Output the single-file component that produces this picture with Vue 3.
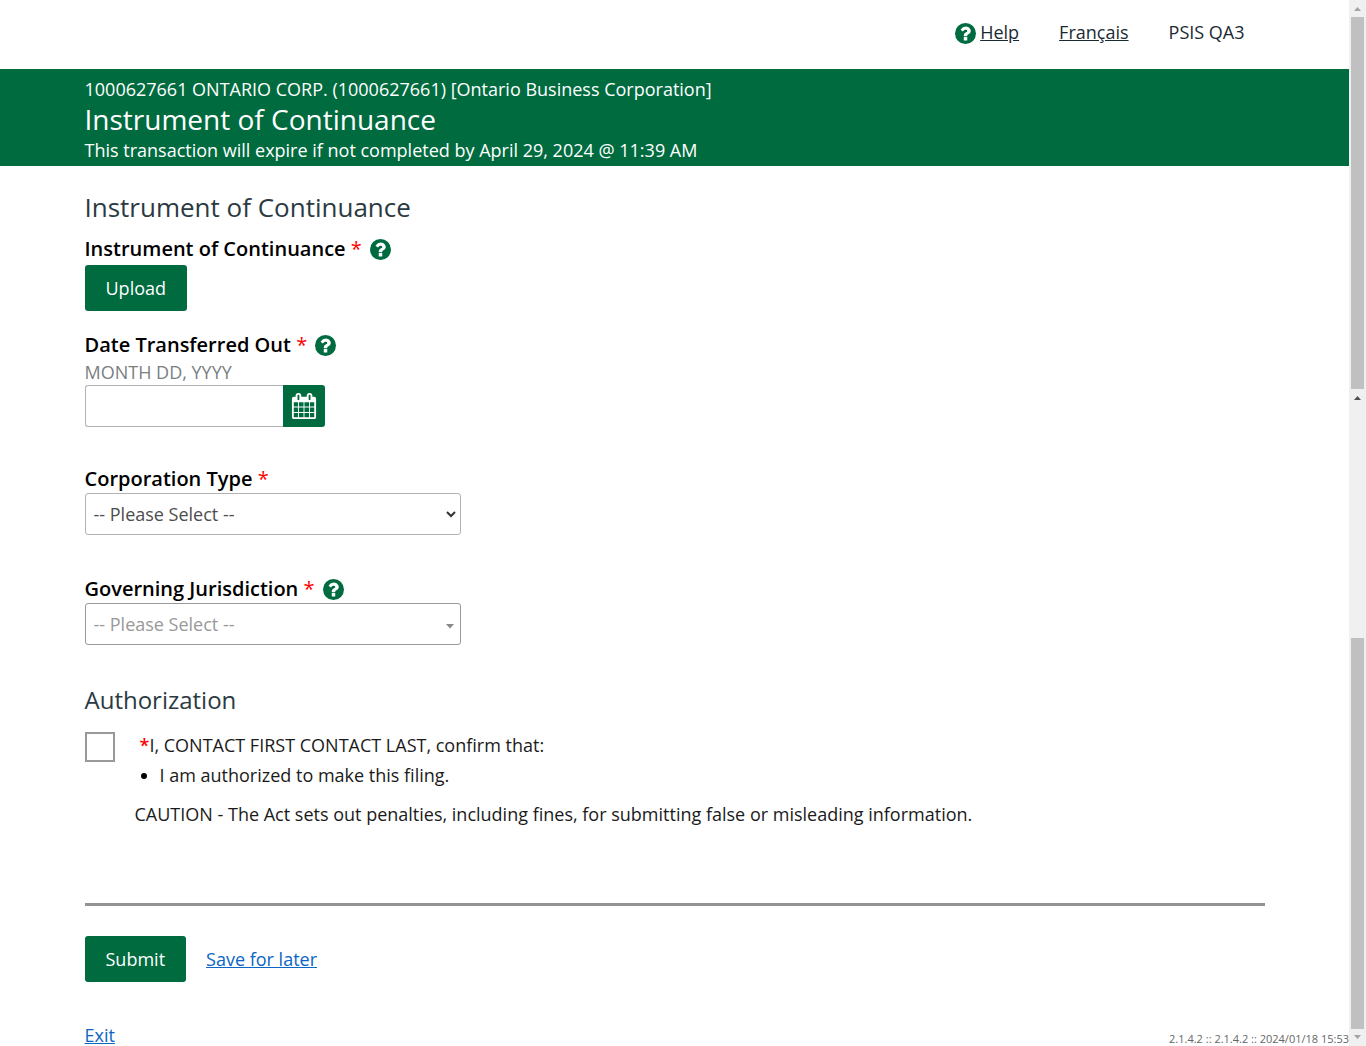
<script setup>
import { ref, h } from 'vue'

const dateOut = ref('')
const corpType = ref('')
const jurisdiction = ref('')
const confirmed = ref(false)

const HelpIcon = () =>
  h('svg', { viewBox: '0 0 1536 1536', width: 21, height: 21, display: 'block', 'aria-hidden': 'true' }, [
    h('circle', { cx: 768, cy: 768, r: 768, fill: '#006b3f' }),
    h('path', {
      fill: '#fff',
      d: 'M896 1248v-192q0-14-9-23t-23-9H672q-14 0-23 9t-9 23v192q0 14 9 23t23 9h192q14 0 23-9t9-23zm256-672q0-88-55.500-163T958 297t-170-41q-243 0-371 213-15 24 8 42l132 100q7 6 19 6 16 0 25-12 53-68 86-92 34-24 86-24 48 0 85.500 26t37.500 59q0 38-20 61t-68 45q-63 28-115.500 86.500T640 892v36q0 14 9 23t23 9h192q14 0 23-9t9-23q0-19 21.500-49.500T972 829q32-18 49-28.500t46-35 44.500-48 28-60.500 12.500-81z'
    })
  ])
</script>

<template>
  <div class="page">
    <div class="main">
      <header class="top wrap">
        <a href="#" class="help"><HelpIcon /><span>Help</span></a>
        <a href="#" class="lang">Français</a>
        <span>PSIS QA3</span>
      </header>

      <div class="banner">
        <div class="wrap">
          <p>1000627661 ONTARIO CORP. (1000627661) [Ontario Business Corporation]</p>
          <h1>Instrument of Continuance</h1>
          <p>This transaction will expire if not completed by April 29, 2024 @ 11:39 AM</p>
        </div>
      </div>

      <form class="wrap form" @submit.prevent>
        <h2 class="section">Instrument of Continuance</h2>

        <div class="field upload">
          <div class="label-row">
            <label for="upload">Instrument of Continuance <b>*</b></label>
            <button type="button" class="tip" aria-label="About this instrument"><HelpIcon /></button>
          </div>
          <button id="upload" type="button" class="btn">Upload</button>
        </div>

        <div class="field date">
          <div class="label-row">
            <label for="date">Date Transferred Out <b>*</b></label>
            <button type="button" class="tip" aria-label="About the date"><HelpIcon /></button>
          </div>
          <div class="hint">MONTH DD, YYYY</div>
          <div class="date-row">
            <input id="date" v-model="dateOut" type="text" />
            <button type="button" class="cal" aria-label="Choose date">
              <svg viewBox="0 0 1792 1792" width="26" height="26" aria-hidden="true">
                <path fill="#fff" d="M192 1664h288v-288h-288v288zm352 0h320v-288h-320v288zm-352-352h288v-320h-288v320zm352 0h320v-320h-320v320zm-352-384h288v-288h-288v288zm736 736h320v-288h-320v288zm-384-736h320v-288h-320v288zm768 736h288v-288h-288v288zm-384-352h320v-320h-320v320zm-352-864v-288q0-13-9.500-22.500t-22.500-9.500h-64q-13 0-22.500 9.500t-9.500 22.500v288q0 13 9.500 22.500t22.500 9.500h64q13 0 22.500-9.500t9.500-22.500zm736 864h288v-320h-288v320zm-384-384h320v-288h-320v288zm384 0h288v-288h-288v288zm32-480v-288q0-13-9.500-22.500t-22.500-9.500h-64q-13 0-22.500 9.500t-9.500 22.500v288q0 13 9.500 22.500t22.500 9.500h64q13 0 22.500-9.500t9.500-22.500zm384-64v1280q0 52-38 90t-90 38h-1408q-52 0-90-38t-38-90v-1280q0-52 38-90t90-38h128v-96q0-66 47-113t113-47h64q66 0 113 47t47 113v96h384v-96q0-66 47-113t113-47h64q66 0 113 47t47 113v96h128q52 0 90 38t38 90z" />
              </svg>
            </button>
          </div>
        </div>

        <div class="field">
          <div class="label-row"><label for="corp">Corporation Type <b>*</b></label></div>
          <div class="select-box">
            <select id="corp" v-model="corpType"><option value="">-- Please Select --</option></select>
            <svg class="arrow" viewBox="0 0 10 7" width="10" height="7"><path d="M1 1l4 4 4-4" fill="none" stroke="#333" stroke-width="2" /></svg>
          </div>
        </div>

        <div class="field">
          <div class="label-row">
            <label for="juris">Governing Jurisdiction <b>*</b></label>
            <button type="button" class="tip" aria-label="About the jurisdiction"><HelpIcon /></button>
          </div>
          <div class="select-box muted">
            <select id="juris" v-model="jurisdiction"><option value="">-- Please Select --</option></select>
            <svg class="arrow" viewBox="0 0 10 6" width="10" height="6"><path d="M1 1h8L5 5.500z" fill="#888" /></svg>
          </div>
        </div>

        <h2 class="section auth">Authorization</h2>
        <div class="confirm">
          <input id="confirm" v-model="confirmed" type="checkbox" />
          <div class="statement">
            <label for="confirm"><b>*</b>I, CONTACT FIRST CONTACT LAST, confirm that:</label>
            <ul><li>I am authorized to make this filing.</li></ul>
            <p>CAUTION - The Act sets out penalties, including fines, for submitting false or misleading information.</p>
          </div>
        </div>

        <hr />
        <div class="actions">
          <button type="submit" class="btn">Submit</button>
          <a href="#">Save for later</a>
        </div>
        <a href="#" class="exit">Exit</a>
      </form>
      <div class="version">2.1.4.2 :: 2.1.4.2 :: 2024/01/18 15:53</div>
    </div>

    <div class="rail" aria-hidden="true">
      <svg class="tri" viewBox="0 0 17 17" width="17" height="17"><path d="M5 11h7L8.500 7z" fill="#a3a3a3" /></svg>
      <div class="thumb upper"></div>
      <svg class="tri" viewBox="0 0 17 17" width="17" height="17"><path d="M5 11h7L8.500 7z" fill="#505050" /></svg>
      <div class="gap"></div>
      <div class="thumb lower"></div>
      <svg class="tri" viewBox="0 0 17 17" width="17" height="17"><path d="M5 6h7l-3.500 4z" fill="#a3a3a3" /></svg>
    </div>
  </div>
</template>

<style>
body { margin: 0; }
</style>

<style scoped>
.page {
  display: flex;
  min-height: 100vh;
  font-family: "Open Sans", "Noto Sans", sans-serif;
  font-size: 18px;
  font-weight: 400;
  line-height: 30px;
  color: #1a1a1a;
  background: #fff;
}
.page * { box-sizing: border-box; }
.main { flex: 1; min-width: 0; position: relative; }
.wrap { max-width: 1180px; margin: 0 auto; }
p, h1, h2, ul { margin: 0; padding: 0; }
button, input, select { font: inherit; margin: 0; }
b { color: #f00; font-weight: 400; }

.top {
  display: flex;
  justify-content: flex-end;
  gap: 40px;
  height: 69px;
  padding: 17px 20px 0 0;
  color: #1a2a33;
}
.top a { color: #1a2a33; }
.help { display: flex; gap: 4px; align-items: flex-start; text-decoration: none; }
.help svg { margin-top: 6px; }
.help span { text-decoration: underline; }

.banner { background: #006b3f; color: #fff; padding: 5px 0 1px; }
.banner h1 { font-size: 28px; font-weight: 400; line-height: 31px; }

.section { font-size: 26px; font-weight: 400; line-height: 36px; color: #2b3a42; }
.section.auth { font-size: 24px; line-height: 30px; }
.form { padding-top: 23px; }
.label-row { display: flex; align-items: center; gap: 8px; height: 28px; }
.label-row label { font-size: 20px; font-weight: 600; color: #000; }
.tip { padding: 0; border: 0; background: none; }
.field { margin-bottom: 40px; }
.field.upload { margin: 8px 0 20px; }
.field.date { margin-bottom: 38px; }
.upload .label-row { height: 32px; }
.btn {
  display: block;
  height: 46px;
  padding: 0 21px;
  border: 0;
  border-radius: 3px;
  background: #006b3f;
  color: #fff;
}
.hint { line-height: 26px; color: #7a7f82; }
.date-row { display: flex; width: 240px; }
.date-row input {
  flex: 1;
  min-width: 0;
  height: 42px;
  border: 1px solid #b3b3b3;
  border-right: 0;
  border-radius: 3px 0 0 3px;
}
.cal {
  display: flex;
  align-items: center;
  justify-content: center;
  width: 42px;
  height: 42px;
  padding: 0;
  border: 0;
  border-radius: 0 3px 3px 0;
  background: #006b3f;
}
.select-box { position: relative; width: 376px; max-width: 100%; }
.select-box select {
  display: block;
  width: 100%;
  height: 42px;
  padding: 0 8px;
  border: 1px solid #b3b3b3;
  border-radius: 3px;
  background: #fff;
  color: #4d4d4d;
  appearance: none;
}
.select-box.muted select { color: #999; border-color: #999; }
.arrow { position: absolute; right: 5px; top: 18px; pointer-events: none; }
.muted .arrow { right: 6px; top: 20px; }

.confirm { display: flex; gap: 20px; margin-top: 17px; }
.confirm input {
  appearance: none;
  flex: none;
  width: 30px;
  height: 30px;
  border: 2px solid #999;
  background: #fff;
}
.statement { margin-top: -2px; }
.statement label { display: block; padding-left: 5px; }
.statement b { font-weight: 600; }
.statement ul { padding-left: 25px; }
.statement li::marker { color: #000; }
.statement p { margin-top: 9px; }
hr { margin: 74px 0 30px; border: 0; height: 3px; background: #939393; }
.actions { display: flex; align-items: center; gap: 20px; }
.actions a, .exit { color: #0b66c3; }
.exit { display: table; margin-top: 42px; line-height: 22px; }
.version {
  position: absolute;
  right: 0;
  bottom: 0;
  font-size: 11px;
  line-height: 14px;
  color: #666;
}

.rail { display: flex; flex-direction: column; flex: none; width: 17px; background: #f0f0f0; }
.tri { display: block; flex: none; }
.thumb { margin: 0 2px; background: #c0c0c0; }
.upper { flex: 372; }
.gap { flex: 232; }
.lower { flex: 391; }
</style>
